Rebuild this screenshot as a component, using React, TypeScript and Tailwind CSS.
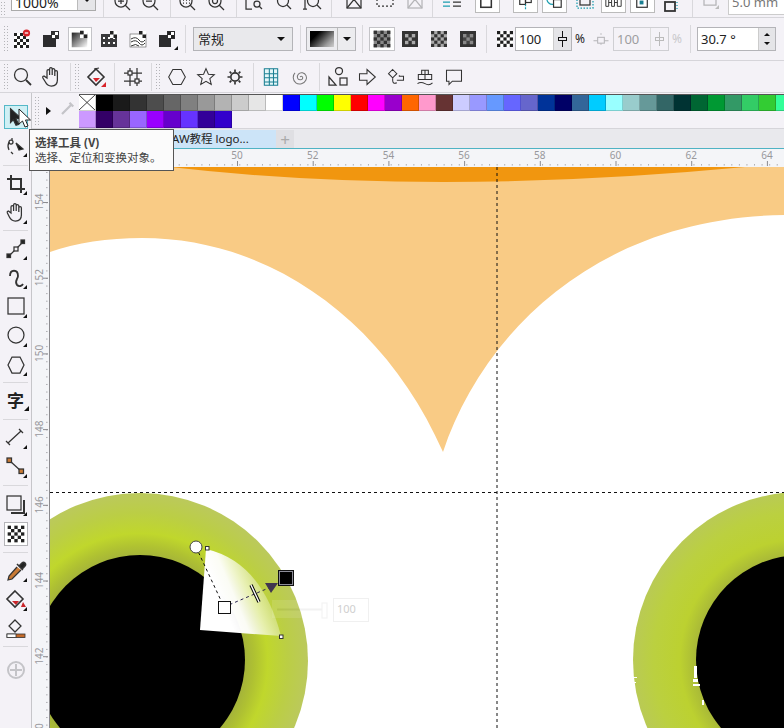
import type { ReactNode } from "react";
import clsx from "clsx";

const paletteTop = [
  "#ffffff", "#000000", "#1a1a1a", "#333333", "#4d4d4d", "#666666", "#808080", "#999999", "#b3b3b3", "#cccccc", "#e6e6e6", "#ffffff",
  "#0000ff", "#00ffff", "#00ff00", "#ffff00", "#ff0000", "#ff00ff", "#9900cc", "#ff6600", "#ff99cc", "#663333", "#ccccff", "#9999ff",
  "#6699ff", "#6666ff", "#6666cc", "#003399", "#000066", "#336699", "#00ccff", "#99ffff", "#99cccc", "#669999", "#336666", "#003333",
  "#006633", "#009933", "#339966", "#33cc66", "#33cc33", "#33ff99",
];
const paletteBottom = ["#cc99ff", "#330066", "#663399", "#9966ff", "#9900ff", "#6600cc", "#6633ff", "#330099", "#3300cc"];

const Ic = ({ children, className }: { children: ReactNode; className?: string }) => (
  <svg viewBox="0 0 24 24" fill="none" stroke="#333" strokeWidth={1.25} className={clsx("w-6 h-6 shrink-0", className)}>
    {children}
  </svg>
);

// little black triangle = tool has a flyout
const Fly = () => <path d="M23 19v4h-4z" fill="#111" stroke="none" />;

const Checks = ({ x, y, n, s, dark = "#222", light = "#fff" }: { x: number; y: number; n: number; s: number; dark?: string; light?: string }) => (
  <g stroke="none">
    <rect x={x} y={y} width={n * s} height={n * s} fill={light} />
    {Array.from({ length: n * n }).map((_, i) =>
      (i % n) % 2 === Math.floor(i / n) % 2 ? (
        <rect key={i} x={x + (i % n) * s} y={y + Math.floor(i / n) * s} width={s} height={s} fill={dark} />
      ) : null
    )}
  </g>
);

const Grip = ({ className }: { className?: string }) => (
  <div className={clsx("w-[5px] h-[28px] shrink-0 bg-[radial-gradient(#b4b4b8_0.8px,transparent_0.9px)] bg-[length:3px_3px]", className)} />
);
const Sep = ({ className }: { className?: string }) => <div className={clsx("w-px h-[28px] bg-[#d9d8dc] shrink-0", className)} />;
const ToolSep = ({ className }: { className?: string }) => <div className={clsx("h-px mx-[3px] bg-[#d9d8dc]", className)} />;

const Tool = ({ children, className }: { children: ReactNode; className?: string }) => (
  <div className={clsx("h-[29px] flex items-center justify-center", className)}>{children}</div>
);

const TopBox = ({ children, className }: { children: ReactNode; className?: string }) => (
  <div className={clsx("w-[25px] h-[22px] -mt-[2px] bg-white border border-[#bbb] flex items-center justify-center shrink-0", className)}>
    <Ic className="w-[23px] h-[23px] shrink-0">{children}</Ic>
  </div>
);

const TopRuler = () => {
  const major = [50, 52, 54, 56, 58, 60, 62, 64];
  const dots = Array.from({ length: 100 }).map((_, i) => 50 + i * 7.57);
  return (
    <svg viewBox="50 149 734 18" className="w-[734px] h-[18px] block">
      {dots.map((x) => (
        <rect key={x} x={x} y={164} width={1} height={1.6} fill="#b0b0b4" />
      ))}
      {major.map((u) => {
        const x = 237 + (u - 50) * 37.85;
        return (
          <g key={u}>
            <rect x={x} y={161} width={1} height={5} fill="#8b8b90" />
            <text x={x} y={159} textAnchor="middle" fontSize={10} fill="#98989c">{u}</text>
          </g>
        );
      })}
    </svg>
  );
};

const LeftRuler = () => {
  const major = [154, 152, 150, 148, 146, 144, 142, 140];
  const dots = Array.from({ length: 76 }).map((_, i) => 172 + i * 7.57);
  return (
    <svg viewBox="32 167 17 561" className="w-[17px] h-[561px] block shrink-0">
      {dots.map((y) => (
        <rect key={y} x={46} y={y} width={1.6} height={1} fill="#b0b0b4" />
      ))}
      {major.map((u) => {
        const y = 202 + (154 - u) * 37.85;
        return (
          <g key={u}>
            <rect x={43} y={y} width={5} height={1} fill="#8b8b90" />
            <text transform={`translate(43 ${y}) rotate(-90)`} textAnchor="middle" fontSize={10} fill="#98989c">{u}</text>
          </g>
        );
      })}
    </svg>
  );
};

const Artwork = () => (
  <svg viewBox="50 167 734 561" className="w-[734px] h-[561px] block">
    <defs>
      <radialGradient id="ringL" gradientUnits="userSpaceOnUse" cx={140} cy={661} r={168}>
        <stop offset="0.62" stopColor="#a4b33a" />
        <stop offset="0.68" stopColor="#afc132" />
        <stop offset="0.76" stopColor="#c0d72c" />
        <stop offset="0.88" stopColor="#bbce45" />
        <stop offset="1" stopColor="#bbc95c" />
      </radialGradient>
      <radialGradient id="ringR" gradientUnits="userSpaceOnUse" cx={801} cy={660} r={168}>
        <stop offset="0.62" stopColor="#a8b838" />
        <stop offset="0.72" stopColor="#bcd130" />
        <stop offset="0.88" stopColor="#bbd040" />
        <stop offset="1" stopColor="#b9ca55" />
      </radialGradient>
      <linearGradient id="fan" gradientUnits="userSpaceOnUse" x1={224} y1={607} x2={274} y2={586}>
        <stop offset="0" stopColor="#fff" />
        <stop offset="0.25" stopColor="#fff" stopOpacity={0.95} />
        <stop offset="1" stopColor="#fff" stopOpacity={0.08} />
      </linearGradient>
    </defs>
    <rect x={50} y={167} width={734} height={561} fill="#fff" />
    {/* peach body */}
    <path d="M50 167H784V215C590 218 480 340 443 452C385 320 270 238 142 238Q90 238 50 252Z" fill="#f9cb85" />
    <path d="M170 167Q430 197 745 167Z" fill="#f1960f" />

    <circle cx={140} cy={661} r={168} fill="url(#ringL)" />
    <circle cx={140} cy={660} r={105} fill="#000" />
    <circle cx={801} cy={660} r={168} fill="url(#ringR)" />
    <circle cx={801} cy={660} r={105} fill="#000" />

    {/* transparency wedge */}
    <path d="M206 549Q262 562 281 636L200 630Z" fill="url(#fan)" />

    {/* guides */}
    <path d="M497 167V728" stroke="#111" strokeDasharray="3 3" />
    <path d="M50 492.500H784" stroke="#111" strokeDasharray="3 3" />

    {/* handles */}
    <path d="M196 547L224 607" stroke="#111" strokeDasharray="3 3" />
    <path d="M224 607L271 587" stroke="#2b2450" strokeDasharray="3 3" />
    <circle cx={196} cy={547} r={6} fill="#fff" stroke="#444" />
    <rect x={205.500} y={546.500} width={3.500} height={3.500} fill="#fff" stroke="#333" />
    <rect x={279.500} y={635} width={3.500} height={3.500} fill="#fff" stroke="#333" />
    <rect x={218.500} y={601.500} width={12} height={12} fill="#fff" stroke="#111" />
    <path d="M265 583H278L271 593Z" fill="#41364f" />
    <rect x={278.500} y={570.500} width={15} height={15} fill="#000" stroke="#111" />
    <rect x={279.500} y={571.500} width={13} height={13} fill="#000" stroke="#8c8c98" />
    <path d="M251 585L259 602" stroke="#000" strokeWidth={3.400} />
    <path d="M251 585L259 602" stroke="#fff" strokeWidth={1.400} />

    {/* faded opacity slider */}
    <g opacity={0.1}>
      <rect x={272} y={600} width={50} height={18} fill="#fff" stroke="none" />
      <path d="M277 609.500H322" stroke="#888" strokeWidth={2} />
      <rect x={322} y={603} width={5} height={15} fill="#fff" stroke="#888" />
    </g>
    <rect x={333.500} y={598.500} width={35} height={23} fill="none" stroke="#f0f0f0" />
    <text x={337} y={613} fontSize={11} fill="#cfcfcf">100</text>

    {/* watermark scraps */}
    <g fill="#fff">
      <rect x={694} y={666} width={3} height={12} />
      <rect x={693} y={679} width={5} height={3} />
      <rect x={693} y={684} width={7} height={2} />
      <rect x={702} y={700} width={2} height={5} />
      <rect x={633} y={677} width={4} height={1} />
      <rect x={632} y={682} width={4} height={1} />
    </g>
  </svg>
);

export default function App() {
  return (
    <div className="relative w-[784px] h-[728px] overflow-hidden bg-[#f4f2f7] text-[#222] font-['Noto_Sans','Noto_Sans_CJK_SC',sans-serif]">
      {/* first command bar, cut by the window top */}
      <div className="h-[18px] border-b border-[#d6d5da] overflow-hidden">
        <div className="h-[6px] flex items-center">
          <Grip className="ml-0" />
          <div className="ml-[6px] w-[85px] h-[24px] -mt-[8px] bg-white border border-[#aaa] flex items-center shrink-0">
            <span className="pl-[3px] flex-1 text-[14px] leading-none pt-[8px]">1000%</span>
            <div className="w-[18px] h-full bg-[#e5e5e8] border-l border-[#bbb] flex items-center justify-center">
              <div className="w-0 h-0 border-x-[5px] border-x-transparent border-t-[5px] border-t-[#111]" />
            </div>
          </div>
          <Sep className="ml-[7px]" />
          <Ic className="ml-[6px]"><circle cx="11" cy="10" r="6" /><path d="M15 14l5 5M11 7v6M8 10h6" /></Ic>
          <Ic className="ml-[4px]"><circle cx="11" cy="10" r="6" /><path d="M15 14l5 5M8 10h6" /></Ic>
          <Sep className="ml-[8px]" />
          <Ic className="ml-[4px]"><circle cx="11" cy="10" r="6" /><path d="M15 14l5 5M8 9h1M11 9h1M14 9h1M8 12h1M11 12h1M14 12h1" /></Ic>
          <Ic className="ml-[5px]"><circle cx="11" cy="10" r="6" /><circle cx="11" cy="10" r="2.500" /><path d="M15 14l5 5" /></Ic>
          <Sep className="ml-[8px]" />
          <Ic className="ml-[4px]"><path d="M5 2v16h6" /><circle cx="16" cy="13" r="3" /><path d="M18 15l3 3" /></Ic>
          <Ic className="ml-[6px]"><circle cx="12" cy="10" r="5.500" /><path d="M16 14l4 4" /></Ic>
          <Ic className="ml-[5px]"><path d="M5 2v16M3 18h4" /><circle cx="13" cy="10" r="5.500" /><path d="M17 14l4 4" /></Ic>
          <Sep className="ml-[7px]" />
          <Ic className="ml-[10px]"><rect x="5" y="0" width="14" height="17" /><path d="M5 17L19 0M5 0l14 17" /></Ic>
          <Ic className="ml-[7px]"><rect x="4" y="0" width="16" height="15" strokeDasharray="2 2" /></Ic>
          <Ic className="ml-[6px]"><rect x="5" y="0" width="14" height="17" stroke="#b5b5b8" /><path d="M5 17L19 0M5 0l14 17" stroke="#b5b5b8" /></Ic>
          <Sep className="ml-[5px]" />
          <Ic className="ml-[7px]"><path d="M3 3h7M3 7h7M3 11h7M3 15h7" stroke="#1a9db0" /><path d="M13 3h8M13 7h8M13 11h8M13 15h8" /></Ic>
          <TopBox className="ml-[11px]"><rect x="5" y="8" width="11" height="9" strokeWidth={1.600} /><path d="M16 8h3" stroke="#1a9db0" /></TopBox>
          <TopBox className="ml-[13px]"><rect x="6" y="6" width="6" height="8" /><rect x="12" y="6" width="6" height="6" /><path d="M12 14v6" stroke="#1a9db0" strokeDasharray="2 1" /></TopBox>
          <TopBox className="ml-[4px]"><circle cx="10" cy="8" r="6" stroke="#1a9db0" /><rect x="11" y="9" width="8" height="8" fill="#fff" /></TopBox>
          <Ic className="ml-[6px]"><rect x="7" y="5" width="10" height="9" /><rect x="4" y="8" width="16" height="9" stroke="#1a9db0" strokeDasharray="1.500 1.500" /></Ic>
          <TopBox className="ml-[4px]"><path d="M4 8h3v8H4zM10 8h3v8h-3zM16 8h4v8h-4zM7 12h3M13 12h3" strokeWidth={1} /></TopBox>
          <TopBox className="ml-[4px]"><rect x="6" y="7" width="11" height="10" /><rect x="9" y="10" width="4" height="4" fill="#1a7f92" stroke="none" /></TopBox>
          <Ic className="ml-[4px]"><rect x="6" y="11" width="10" height="9" strokeWidth={1.800} /><path d="M18 11v1M18 14v1M18 17v1" stroke="#1a9db0" /></Ic>
          <Sep className="ml-[9px]" />
          <Ic className="ml-[6px]"><path d="M5 0v14h12V0" stroke="#b5b5b8" /><path d="M20 14v4h-4z" fill="#bbb" stroke="none" /></Ic>
          <div className="ml-[5px] w-[60px] h-[24px] bg-white border border-[#ccc] pl-[3px] pt-[1px] text-[13px] leading-[18px] text-[#777] whitespace-nowrap shrink-0">5.0 mm</div>
        </div>
      </div>

      {/* property bar */}
      <div className="h-[43px] border-b border-[#d6d5da] flex items-center pl-[3px]">
        <Grip />
        <div className="ml-[2px] flex items-center gap-[5px]">
          <Ic><Checks x={4} y={6} n={5} s={3} /><circle cx="16.500" cy="6" r="3.600" fill="#d8232a" stroke="none" /><path d="M14.800 6h3.400" stroke="#fff" /></Ic>
          <Ic><path d="M4 8h8V4h8v8h-3v8H4z" fill="#2c2c2e" stroke="none" /><Checks x={13} y={5} n={2} s={3} dark="#333" /></Ic>
          <div className="w-[24px] h-[24px] bg-white border border-[#c4c4c8] flex items-center justify-center shrink-0">
            <Ic className="w-[22px] h-[22px]">
              <defs><linearGradient id="tg" x1="0" y1="0" x2="1" y2="1"><stop offset="0" stopColor="#222" /><stop offset="1" stopColor="#fff" /></linearGradient></defs>
              <rect x="3" y="5" width="17" height="16" fill="url(#tg)" stroke="none" />
              <Checks x={12} y={3} n={2} s={4} dark="#222" />
            </Ic>
          </div>
          <Ic><rect x="4" y="7" width="16" height="13" fill="#3a3a3c" stroke="none" /><path d="M6 11h2M11 11h2M16 11h2M6 16h2M11 16h2M16 16h2" stroke="#fff" strokeWidth={2} /><Checks x={13} y={4} n={2} s={3.500} /></Ic>
          <Ic><rect x="4" y="7" width="16" height="13" fill="#fff" stroke="#555" strokeWidth={0.600} /><path d="M5 12q5-3 8 1t6 0M5 15q5-3 8 1t6 0M5 19q5-3 8 0" strokeWidth={1} /><Checks x={13} y={4} n={2} s={3.500} /></Ic>
          <Ic><path d="M4 8h8V4h8v8h-4v8H4z" fill="#2c2c2e" stroke="none" /><Checks x={13} y={5} n={2} s={3} /><Fly /></Ic>
        </div>
        <Sep className="ml-[6px]" />
        <div className="ml-[7px] w-[100px] h-[24px] bg-[#e9e9ec] border border-[#b4b4b8] flex items-center justify-between px-[4px] shrink-0">
          <span className="text-[13px] leading-none">常规</span>
          <div className="w-0 h-0 mr-[3px] border-x-[4px] border-x-transparent border-t-[4px] border-t-[#111]" />
        </div>
        <Sep className="ml-[7px]" />
        <div className="ml-[5px] w-[50px] h-[24px] bg-[#ececef] border border-[#b4b4b8] flex items-center shrink-0">
          <div className="w-[31px] h-full border-r border-[#bbb] p-[3px]">
            <div className="w-full h-full bg-[linear-gradient(135deg,#000_25%,#9a9a9a_75%,#cfcfcf)]" />
          </div>
          <div className="flex-1 flex justify-center"><div className="w-0 h-0 border-x-[4px] border-x-transparent border-t-[4px] border-t-[#111]" /></div>
        </div>
        <Sep className="ml-[6px]" />
        <div className="ml-[6px] w-[26px] h-[24px] bg-white border border-[#c4c4c8] flex items-center justify-center shrink-0">
          <Ic className="w-[20px] h-[20px]"><Checks x={2} y={2} n={5} s={4} dark="#333" light="#888" /></Ic>
        </div>
        <div className="ml-[3px] flex items-center gap-[5px]">
          <Ic><rect x="4" y="4" width="16" height="16" fill="#333" stroke="none" /><Checks x={7} y={7} n={3} s={3.400} dark="#aaa" light="#333" /></Ic>
          <Ic><Checks x={4} y={4} n={5} s={3.200} dark="#333" light="#aaa" /></Ic>
          <Ic><rect x="4" y="4" width="16" height="16" fill="#333" stroke="none" /><Checks x={7} y={7} n={3} s={3.400} dark="#888" light="#444" /></Ic>
        </div>
        <Sep className="ml-[6px]" />
        <Ic className="ml-[5px]"><Checks x={5} y={4} n={5} s={3.200} dark="#1f1f1f" /></Ic>
        <div className="-ml-[1px] w-[57px] h-[24px] bg-white border border-[#b4b4b8] flex items-center shrink-0">
          <span className="pl-[3px] flex-1 text-[13px] leading-none">100</span>
          <div className="w-[18px] h-full bg-[#e5e5e8] border-l border-[#ccc] flex items-center justify-center relative">
            <div className="w-px h-[16px] bg-[#111]" />
            <div className="absolute w-[9px] h-[4px] border border-[#111] bg-[#e5e5e8]" />
          </div>
        </div>
        <span className="ml-[3px] w-[10px] text-[12px] leading-none">%</span>
        <Ic className="ml-[6px] w-[20px] h-[20px]"><path d="M3 14h5M16 14h5M12 5v2M12 17v2" stroke="#b5b5b8" /><rect x="8" y="10" width="8" height="7" stroke="#b5b5b8" /></Ic>
        <div className="ml-[2px] w-[56px] h-[24px] border border-[#cfcfd3] flex items-center shrink-0">
          <span className="pl-[3px] flex-1 text-[13px] leading-none text-[#9d9da0]">100</span>
          <div className="w-[18px] h-full border-l border-[#ddd] flex items-center justify-center relative">
            <div className="w-px h-[14px] bg-[#bbb]" />
            <div className="absolute w-[9px] h-[4px] border border-[#bbb]" />
          </div>
        </div>
        <span className="ml-[3px] w-[10px] text-[12px] leading-none text-[#c9c9cc]">%</span>
        <Sep className="ml-[8px]" />
        <div className="ml-[6px] w-[79px] h-[24px] bg-white border border-[#b4b4b8] flex items-center shrink-0">
          <span className="pl-[3px] flex-1 text-[13px] leading-none">30.7 °</span>
          <div className="w-[17px] h-full bg-[#e5e5e8] border-l border-[#ccc] flex flex-col items-center justify-center gap-[6px]">
            <div className="w-0 h-0 border-x-[3px] border-x-transparent border-b-[3px] border-b-[#111]" />
            <div className="w-0 h-0 border-x-[3px] border-x-transparent border-t-[3px] border-t-[#111]" />
          </div>
        </div>
      </div>

      {/* standard shapes bar */}
      <div className="h-[32px] border-b border-[#d6d5da] flex items-center pl-[3px]">
        <Grip />
        <Ic className="ml-[2px]"><circle cx="11" cy="10" r="6.500" /><path d="M16 15l5 5" strokeWidth={1.800} /></Ic>
        <Ic className="ml-[6px]"><path d="M7 13V6a1.300 1.300 0 012.600 0v4V4a1.300 1.300 0 012.600 0v6V5a1.300 1.300 0 012.600 0v6V7a1.300 1.300 0 012.600 0v8q0 6-6 6-4 0-6-4l-2.500-4q-.600-1.800 1-2z" /></Ic>
        <Sep className="ml-[6px]" />
        <Grip className="ml-[3px]" />
        <Ic className="ml-[5px]"><path d="M9 13h7l-4 4z" fill="#d8232a" stroke="none" /><path d="M12 4l8 8-8 8-8-8z" strokeWidth={1.600} /><path d="M10 4l5-1" /><path d="M22 17v5h-5z" fill="#d8232a" stroke="none" /></Ic>
        <Sep className="ml-[6px]" />
        <Ic className="ml-[6px]"><path d="M9 3v18M16 3v18M3 8h18M3 16h18" /><rect x="7" y="6" width="4" height="4" fill="#f4f2f7" /><rect x="14" y="14" width="4" height="4" fill="#f4f2f7" /></Ic>
        <Sep className="ml-[6px]" />
        <Grip className="ml-[3px]" />
        <Ic className="ml-[7px] mr-[2px] w-[20px] h-[20px]"><path d="M7 3h10l5 9-5 9H7l-5-9z" /></Ic>
        <Ic className="ml-[7px] mr-[2px] w-[20px] h-[20px]"><path d="M12 2l2.900 6.700 7.100.6-5.400 4.700 1.700 7-6.300-3.800-6.300 3.800 1.700-7L2 9.300l7.100-.6z" /></Ic>
        <Ic className="ml-[7px] mr-[2px] w-[20px] h-[20px]"><circle cx="12" cy="12" r="5" strokeWidth={2} /><path d="M12 3v3M12 18v3M3 12h3M18 12h3M5.600 5.600l2 2M16.400 16.400l2 2M5.600 18.400l2-2M16.400 7.600l2-2" strokeWidth={2} /></Ic>
        <Sep className="ml-[6px]" />
        <Ic className="ml-[7px] mr-[2px] w-[20px] h-[20px]"><path d="M4 2h16v20H4z" fill="#e3f6f8" stroke="#1a7f92" /><path d="M4 8h16M4 13h16M4 18h16M10 2v20M15 2v20" stroke="#1a7f92" /></Ic>
        <Ic className="ml-[7px] mr-[2px] w-[20px] h-[20px]"><path d="M12 12c2-2 4 0 3 2s-5 2-6-1 2-7 6-6 6 5 4 9-8 6-12 3-4-9-1-12" stroke="#777" /></Ic>
        <Sep className="ml-[7px]" />
        <Ic className="ml-[6px]"><circle cx="13" cy="6" r="3.500" /><path d="M3 20v-8l7 8z" /><rect x="14" y="13" width="7" height="7" /></Ic>
        <Ic className="ml-[7px] mr-[2px] w-[20px] h-[20px]"><path d="M3 8h9V3l10 9-10 9v-5H3z" /></Ic>
        <Ic className="ml-[7px] mr-[2px] w-[20px] h-[20px]"><path d="M8 3l5 5-5 5-5-5zM13 16h8v-5h-5v-1M8 13v3q0 5 5 3" /></Ic>
        <Ic className="ml-[7px] mr-[2px] w-[20px] h-[20px]"><path d="M8 4h8v5H8zM4 9h16v6H4zM3 20q4-3 9 0t9-1M12 4v11" /></Ic>
        <Ic className="ml-[7px] mr-[2px] w-[20px] h-[20px]"><path d="M3 4h18v13H10l-4 4v-4H3z" /></Ic>
      </div>

      <div className="flex">
        {/* toolbox */}
        <div className="w-[32px] h-[635px] border-r border-[#c6c6ca] pt-[9px] shrink-0">
          <Tool><div className="w-[24px] h-[24px] bg-[#cff0f5] border border-[#55b8c8]"><Ic className="w-[22px] h-[22px]"><path d="M6 3l11 10-5 1 3 6-3 1-3-6-3 3z" fill="#222" /></Ic></div></Tool>
          <Tool><Ic><path d="M8 4v2M5 8a9 9 0 000 8M7 18l2 2" /><circle cx="7" cy="8" r="2" /><path d="M12 9l7 6-4 1z" fill="#111" /><Fly /></Ic></Tool>
          <ToolSep className="mt-[5px] mb-[3px]" />
          <Tool><Ic><path d="M7 3v14h14M3 7h14v14" strokeWidth={2} /><Fly /></Ic></Tool>
          <Tool><Ic><path d="M7 12V6a1.300 1.300 0 012.600 0v4V4a1.300 1.300 0 012.600 0v6V5a1.300 1.300 0 012.600 0v6V7a1.300 1.300 0 012.600 0v7q0 6-6 6-4 0-6-4l-2-4q-.600-1.800 1-2z" /><Fly /></Ic></Tool>
          <ToolSep className="mt-[3px] mb-[3px]" />
          <Tool><Ic><path d="M5 19L19 5" /><rect x="3" y="17" width="3.500" height="3.500" fill="#222" /><rect x="17" y="3" width="3.500" height="3.500" fill="#222" /><rect x="10" y="10" width="4" height="4" fill="#f4f2f7" /><Fly /></Ic></Tool>
          <Tool><Ic><path d="M6 10c0-7 8-7 8 0 0 3-4 5-1 9 2 2 5 1 6-1" strokeWidth={1.800} /><Fly /></Ic></Tool>
          <Tool><Ic><rect x="4" y="3" width="16" height="16" /><Fly /></Ic></Tool>
          <Tool><Ic><circle cx="12" cy="11" r="8" /><Fly /></Ic></Tool>
          <Tool><Ic><path d="M8 4h8l4 8-4 8H8l-4-8z" /><Fly /></Ic></Tool>
          <ToolSep className="mt-[3px] mb-[3px]" />
          <Tool><span className="relative text-[17px] leading-none font-bold text-[#222]">字<span className="absolute -right-[5px] -bottom-[2px] w-0 h-0 border-l-[5px] border-l-transparent border-b-[5px] border-b-[#111]" /></span></Tool>
          <ToolSep className="mt-[4px] mb-[3px]" />
          <Tool><Ic><path d="M4 17L17 5M2 15l4 4M15 3l4 4" /><Fly /></Ic></Tool>
          <Tool><Ic><path d="M6 6l12 11" /><rect x="3" y="3" width="4.500" height="4.500" fill="#c97a35" stroke="#333" /><rect x="15" y="14" width="4.500" height="4.500" fill="#c97a35" stroke="#333" /><Fly /></Ic></Tool>
          <ToolSep className="mt-[4px] mb-[4px]" />
          <Tool><Ic><rect x="3" y="3" width="14" height="14" /><path d="M20 7v13H7" strokeWidth={2} /><Fly /></Ic></Tool>
          <Tool><div className="w-[24px] h-[24px] bg-white border border-[#b4b4b8] flex items-center justify-center"><Ic className="w-[20px] h-[20px]"><Checks x={2} y={2} n={5} s={4} dark="#222" /></Ic></div></Tool>
          <ToolSep className="mt-[4px] mb-[3px]" />
          <Tool><Ic><path d="M13 8l-8 9-1 4 4-1 9-9" fill="#c97a35" /><path d="M13 5l6 6M15 7l3-3a1.500 1.500 0 013 3l-3 3z" fill="#222" strokeWidth={1.600} /><Fly /></Ic></Tool>
          <Tool><Ic><path d="M8 13h7l-3 4z" fill="#c9252a" stroke="none" /><path d="M11 3l8 8-8 8-8-8z" strokeWidth={1.600} /><path d="M19 14l3 5h-5z" fill="#c9252a" stroke="none" /><Fly /></Ic></Tool>
          <Tool><Ic><path d="M11 3l6 6-6 6-6-6z" /><rect x="3" y="17" width="18" height="3.500" fill="#c46a2a" stroke="#333" strokeWidth={0.800} /><rect x="3" y="17" width="9" height="3.500" fill="#fff" stroke="#333" strokeWidth={0.800} /></Ic></Tool>
          <ToolSep className="mt-[3px] mb-[8px]" />
          <Tool><Ic><circle cx="12" cy="12" r="8" stroke="#c4c4c8" strokeWidth={2} /><path d="M12 6v12M6 12h12" stroke="#c4c4c8" strokeWidth={2} /></Ic></Tool>
        </div>

        <div className="flex-1 min-w-0">
          {/* colour palette */}
          <div className="h-[35px] flex">
            <Grip className="ml-[2px] mt-[3px] h-[30px]" />
            <div className="ml-[7px] mt-[14px] w-0 h-0 border-y-[4px] border-y-transparent border-l-[5px] border-l-[#111]" />
            <Ic className="ml-[8px] mt-[6px] w-[18px] h-[18px]"><path d="M4 20L16 8M14 5l5 5" stroke="#c4c4c8" strokeWidth={3} /></Ic>
            <div className="ml-[2px] pt-[1px] overflow-hidden">
              <div className="flex border-t border-[#555]">
                {paletteTop.map((c, i) => (
                  <div key={i} className="w-[17px] h-[16px] shrink-0 border-r border-b border-[#00000030] relative" style={{ backgroundColor: c }}>
                    {i === 0 && (
                      <svg viewBox="0 0 17 16" className="w-full h-full block"><path d="M0 0l17 16M17 0L0 16" stroke="#333" /></svg>
                    )}
                  </div>
                ))}
              </div>
              <div className="flex">
                {paletteBottom.map((c, i) => (
                  <div key={i} className="w-[17px] h-[17px] shrink-0 border-r border-b border-[#00000030]" style={{ backgroundColor: c }} />
                ))}
              </div>
            </div>
          </div>

          {/* document tabs */}
          <div className="h-[21px] bg-[#e9e9ed] border-t border-[#d6d5da] border-b border-b-[#4fb3c4] flex">
            <div className="w-[244px] h-[18px] mt-[1px] bg-[#cce4f8] flex items-center pl-[140px] text-[11.5px] leading-none whitespace-nowrap shrink-0">AW教程 logo...</div>
            <div className="w-[18px] h-[18px] mt-[1px] bg-[#dfdfe3] text-[#aaa] flex items-center justify-center text-[17px] leading-none shrink-0">+</div>
          </div>

          {/* rulers and page */}
          <div className="h-[18px] flex bg-[#f4f5f8]">
            <div className="w-[18px] shrink-0" />
            <TopRuler />
          </div>
          <div className="flex bg-[#f4f5f8]">
            <LeftRuler />
            <div className="w-px bg-[#8a8a8e] shrink-0" />
            <Artwork />
          </div>
        </div>
      </div>

      {/* tooltip over the toolbox */}
      <div className="absolute left-[29px] top-[129px] w-[145px] h-[42px] bg-[#fbfbfb] border border-[#555] pl-[5px] pt-[5px] text-[11.5px] leading-[15px] text-[#444]">
        <div className="font-bold whitespace-nowrap">选择工具 (V)</div>
        <div className="whitespace-nowrap">选择、定位和变换对象。</div>
      </div>

      {/* mouse pointer */}
      <svg viewBox="0 0 14 20" className="absolute left-[18px] top-[108px] w-[14px] h-[20px]">
        <path d="M1 1v15l3.500-3 2.500 6 3-1-2.500-6h5z" fill="#fff" stroke="#222" strokeWidth={1} />
      </svg>
    </div>
  );
}
